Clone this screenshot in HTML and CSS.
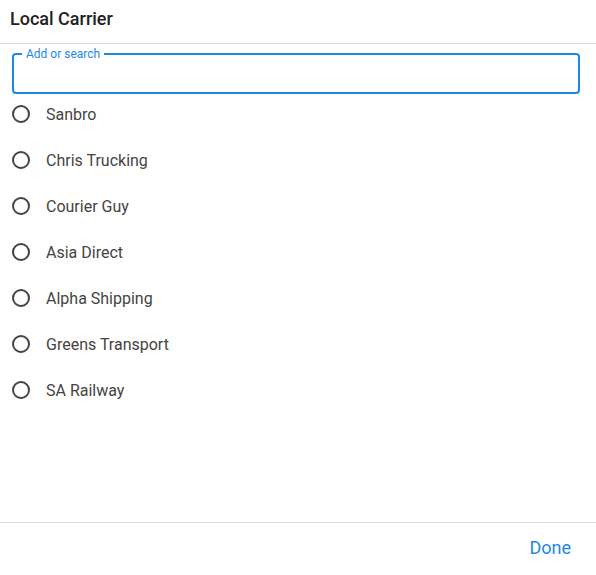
FILE: index.html
```html
<!DOCTYPE html>
<html>
<head>
<meta charset="utf-8">
<link rel="stylesheet" href="styles.css">
</head>
<body>
<div class="dialog">
  <div class="header"><h2 class="title">Local Carrier</h2></div>
  <div class="content">
    <fieldset class="field">
      <legend class="label">Add or search</legend>
      <input class="input" type="text">
    </fieldset>
    <ul class="list">
      <li class="item"><span class="radio"></span><span class="name">Sanbro</span></li>
      <li class="item"><span class="radio"></span><span class="name">Chris Trucking</span></li>
      <li class="item"><span class="radio"></span><span class="name">Courier Guy</span></li>
      <li class="item"><span class="radio"></span><span class="name">Asia Direct</span></li>
      <li class="item"><span class="radio"></span><span class="name">Alpha Shipping</span></li>
      <li class="item"><span class="radio"></span><span class="name">Greens Transport</span></li>
      <li class="item"><span class="radio"></span><span class="name">SA Railway</span></li>
    </ul>
  </div>
  <div class="footer"><button class="done">Done</button></div>
</div>
</body>
</html>
```
FILE: styles.css
```css
html, body {
  margin: 0;
  padding: 0;
  background: #fff;
}
body {
  font-family: Roboto, "Liberation Sans", sans-serif;
  color: #333;
}
.dialog {
  width: 596px;
  height: 575px;
  display: flex;
  flex-direction: column;
}
.header {
  height: 43px;
  border-bottom: 1px solid #dcdcdc;
  padding: 0 10px;
  box-sizing: content-box;
}
.title {
  margin: 0;
  padding-top: 7px;
  font-size: 18px;
  line-height: 24px;
  font-weight: 500;
  color: #222;
}
.content {
  flex: 1;
  display: flex;
  flex-direction: column;
}
.field {
  margin: 4px 16px 0 12px;
  padding: 0 8px;
  border: 2px solid #1e88e5;
  border-radius: 4px;
  min-width: 0;
}
.label {
  padding: 0 4px;
  font-size: 12px;
  line-height: 12px;
  color: #1e88e5;
}
.input {
  display: block;
  width: 100%;
  height: 32px;
  border: 0;
  outline: none;
  padding: 0;
  margin: 0;
  background: transparent;
  font: inherit;
}
.list {
  list-style: none;
  margin: -3px 0 0;
  padding: 0;
}
.item {
  height: 46px;
  display: flex;
  align-items: center;
  padding-left: 12px;
}
.radio {
  width: 14px;
  height: 14px;
  border: 2px solid #444;
  border-radius: 50%;
  flex: none;
}
.name {
  margin-left: 16px;
  font-size: 16px;
  color: #444;
}
.footer {
  height: 53px;
  box-sizing: border-box;
  border-top: 1px solid #dcdcdc;
  display: flex;
  align-items: center;
  justify-content: flex-end;
  padding: 0 17px 4px 0;
}
.done {
  border: 0;
  background: transparent;
  font-family: Roboto, "Liberation Sans", sans-serif;
  font-size: 18px;
  color: #1e88e5;
  padding: 6px 8px;
}
```
